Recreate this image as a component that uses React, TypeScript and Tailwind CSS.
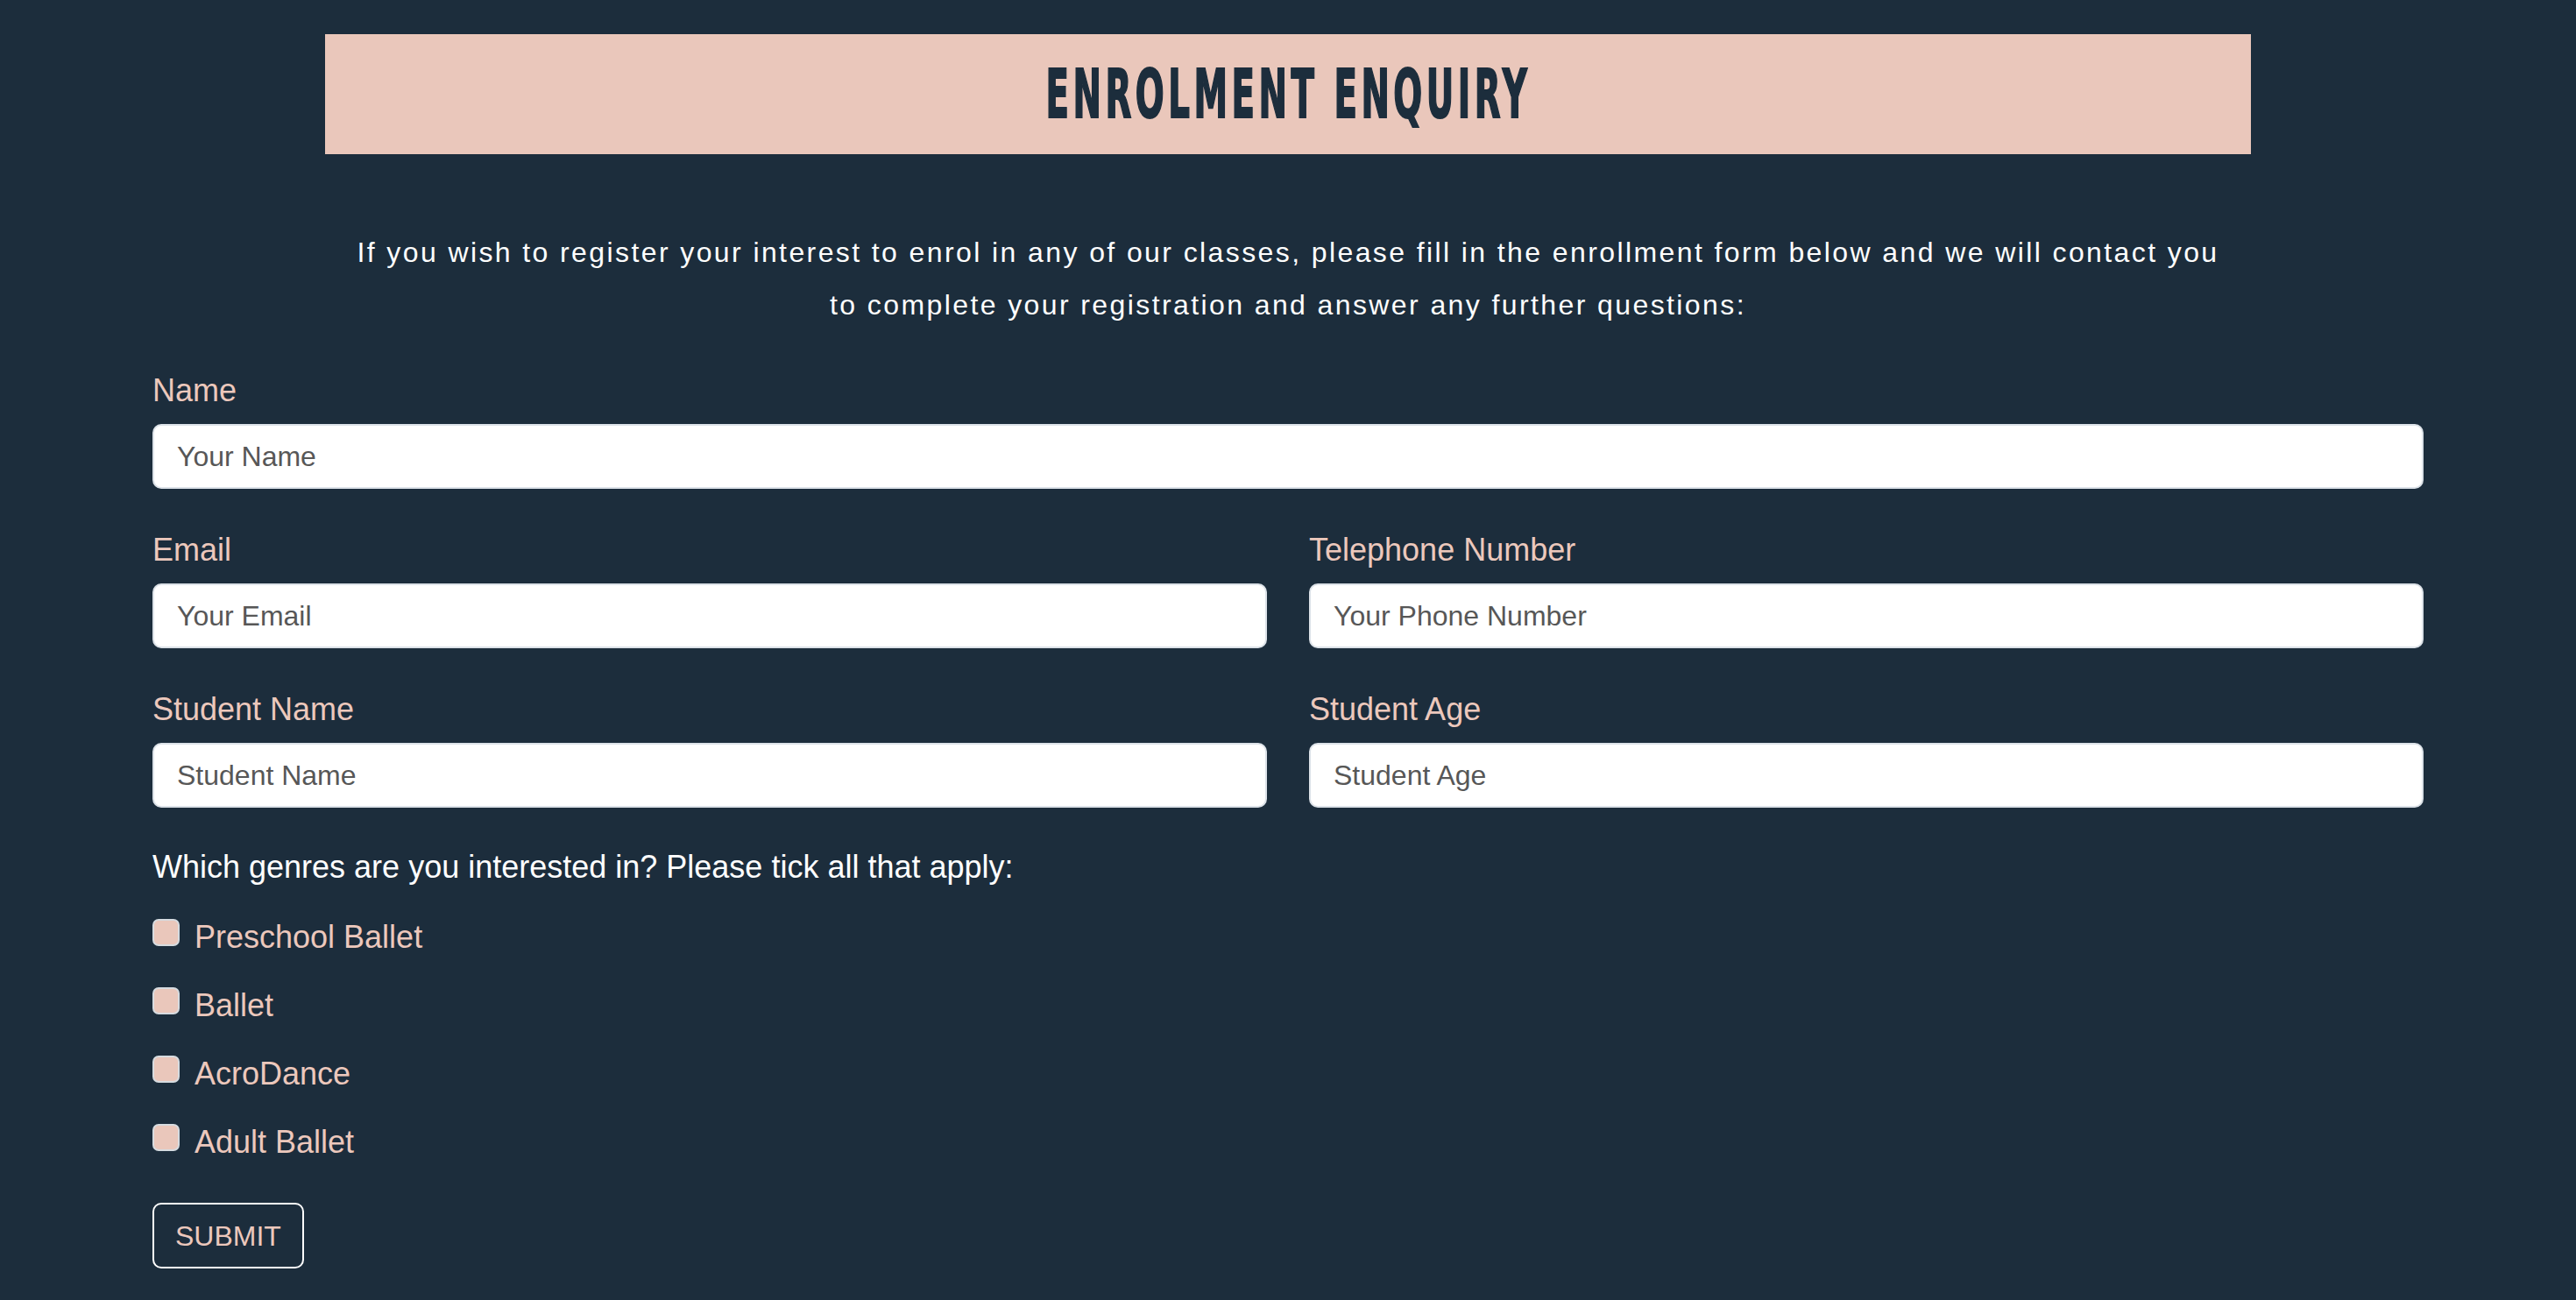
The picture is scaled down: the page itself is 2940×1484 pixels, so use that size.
import { useState } from "react";

const genres = ["Preschool Ballet", "Ballet", "AcroDance", "Adult Ballet"];

function Field({ label, placeholder }: { label: string; placeholder: string }) {
  return (
    <div className="flex flex-col">
      <label className="mb-[12px] text-[36px] leading-[52px] text-[#ecc8bc]">{label}</label>
      <input
        type="text"
        placeholder={placeholder}
        className="h-[74px] w-full rounded-[10px] border-2 border-[#dce2e8] bg-white px-[26px] text-[32px] text-[#333] outline-none placeholder:text-[#575757]"
      />
    </div>
  );
}

export default function App() {
  const [checked, setChecked] = useState<string[]>([]);

  const toggle = (g: string) =>
    setChecked((prev) => (prev.includes(g) ? prev.filter((x) => x !== g) : [...prev, g]));

  return (
    <div className="min-h-screen bg-[#1c2d3c] pb-[30px] font-['Liberation_Sans',Arial,sans-serif]">
      {/* Banner */}
      <div className="px-[371px] pt-[39px]">
        <div className="flex h-[137px] items-center justify-center bg-[#eac7bb]">
          <h1 className="inline-block scale-x-[0.56] whitespace-nowrap font-['DejaVu_Sans_Condensed','DejaVu_Sans',sans-serif] text-[77px] font-bold leading-none tracking-[8px] text-[#1c2d3c] [-webkit-text-stroke:2px_#1c2d3c]">
            ENROLMENT ENQUIRY
          </h1>
        </div>
      </div>

      {/* Intro */}
      <p className="mt-[82px] text-center text-[32px] leading-[60px] tracking-[2.4px] text-white">
        If you wish to register your interest to enrol in any of our classes, please fill in the enrollment form below and we will contact you
        <br />
        to complete your registration and answer any further questions:
      </p>

      {/* Form */}
      <form className="mt-[42px] px-[174px]" onSubmit={(e) => e.preventDefault()}>
        <div className="flex flex-col gap-[44px]">
          <Field label="Name" placeholder="Your Name" />
          <div className="grid grid-cols-2 gap-x-[48px]">
            <Field label="Email" placeholder="Your Email" />
            <Field label="Telephone Number" placeholder="Your Phone Number" />
          </div>
          <div className="grid grid-cols-2 gap-x-[48px]">
            <Field label="Student Name" placeholder="Student Name" />
            <Field label="Student Age" placeholder="Student Age" />
          </div>
        </div>

        <p className="mt-[42px] text-[36px] leading-[52px] text-white">
          Which genres are you interested in? Please tick all that apply:
        </p>

        <div className="mt-[28px] flex flex-col gap-[26px]">
          {genres.map((g) => (
            <label key={g} className="flex cursor-pointer items-start gap-[17px]">
              <input
                type="checkbox"
                checked={checked.includes(g)}
                onChange={() => toggle(g)}
                className="mt-[5px] h-[31px] w-[31px] shrink-0 appearance-none rounded-[7px] border-2 border-[#d6dbe0] bg-[#eac7bb] checked:bg-[#c99f92]"
              />
              <span className="text-[36px] leading-[52px] text-[#ecc8bc]">{g}</span>
            </label>
          ))}
        </div>

        <button
          type="submit"
          className="mt-[43px] flex h-[75px] items-center rounded-[10px] border-2 border-white px-[24px] text-[32px] text-[#ecc8bc]"
        >
          SUBMIT
        </button>
      </form>
    </div>
  );
}
